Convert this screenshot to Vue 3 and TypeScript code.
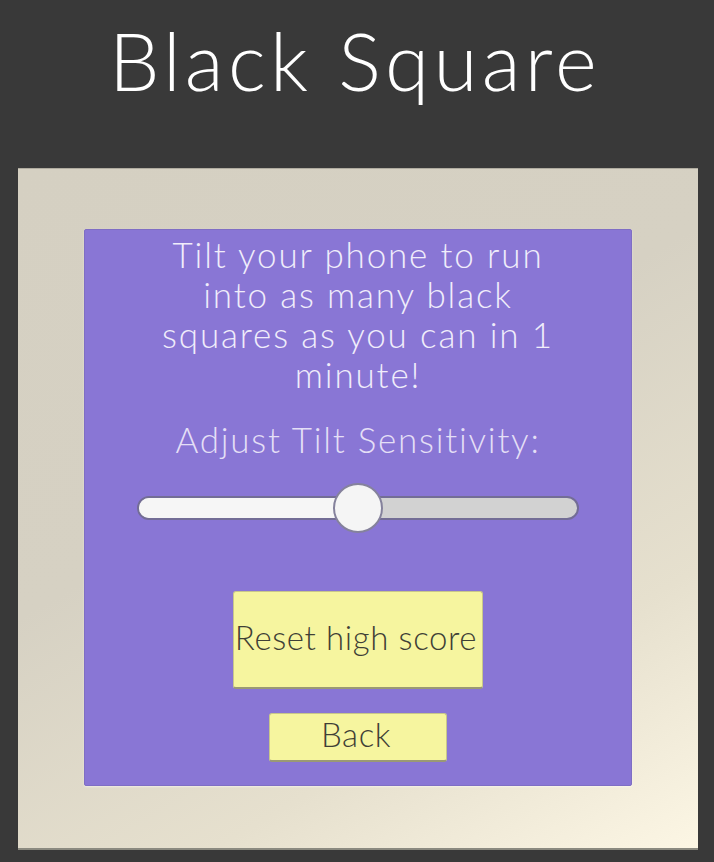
<script setup lang="ts">
const lines: string[] = ['Tilt your phone to run', 'into as many black', 'squares as you can in 1', 'minute!']
const sliderValue = 50
</script>

<template>
  <div class="page">
    <h1 class="title">Black Square</h1>
    <main class="board">
      <section class="card">
        <p class="intro">
          <span v-for="line in lines" :key="line" class="line">{{ line }}</span>
        </p>
        <label class="adjust">Adjust Tilt Sensitivity:</label>
        <div class="slider">
          <div class="fill" :style="{ width: sliderValue + '%' }"></div>
          <div class="thumb" :style="{ left: sliderValue + '%' }"></div>
        </div>
        <button class="btn reset">Reset high score</button>
        <button class="btn back">Back</button>
      </section>
    </main>
  </div>
</template>

<style>
html, body { margin: 0; background: #393939; }
</style>

<style scoped>
.page {
  width: 714px;
  height: 862px;
  box-sizing: border-box;
  padding: 0 16px 12px 18px;
  display: flex;
  flex-direction: column;
  background: #393939;
  font-family: "Lato", "Liberation Sans", sans-serif;
  font-weight: 300;
  overflow: hidden;
}
.title {
  margin: 0;
  height: 168px;
  box-sizing: border-box;
  padding: 14px 6px 0 0;
  font-size: 80px;
  line-height: 92px;
  font-weight: 300;
  color: #fff;
  text-align: center;
  letter-spacing: 4.3px;
}
.board {
  flex: 1;
  display: flex;
  justify-content: center;
  align-items: flex-start;
  padding-top: 60px;
  background: linear-gradient(150deg, #d5d0c2 0%, #d6d1c3 42%, #e6e0ce 74%, #fcf6e4 100%);
  border-top: 1px solid #b0aca0;
  border-bottom: 2px solid #8b8a80;
}
.card {
  width: 548px;
  height: 557px;
  box-sizing: border-box;
  background: #8976d5;
  border-radius: 2px;
  border: 1px solid #7f6ec4;
  box-shadow: 0 1px 2px rgba(255, 255, 255, 0.5);
  display: flex;
  flex-direction: column;
  align-items: center;
  padding-top: 4px;
}
.intro {
  margin: 0;
  font-size: 35px;
  line-height: 40px;
  color: #f0edfb;
  text-align: center;
  letter-spacing: 1.85px;
}
.line { display: block; }
.adjust {
  margin-top: 25px;
  font-size: 35px;
  line-height: 40px;
  color: #e4dff6;
  letter-spacing: 1.75px;
}
.slider {
  position: relative;
  margin-top: 37px;
  width: 442px;
  height: 24px;
  box-sizing: border-box;
  background: #d2d2d2;
  border: 2px solid #736d96;
  border-radius: 12px;
}
.fill {
  height: 100%;
  background: #f6f6f6;
  border-radius: 10px 0 0 10px;
}
.thumb {
  position: absolute;
  top: 50%;
  width: 50px;
  height: 50px;
  box-sizing: border-box;
  transform: translate(-50%, -50%);
  background: #f5f5f5;
  border: 2px solid #85829c;
  border-radius: 50%;
}
.btn {
  display: block;
  box-sizing: border-box;
  padding: 0 4px 6px 0;
  background: #f6f59f;
  border: 1px solid #c8c78a;
  border-bottom: 2px solid #9a9974;
  border-radius: 3px;
  color: #3f3f36;
  font-family: inherit;
  font-weight: 300;
  font-size: 33px;
  letter-spacing: 0.6px;
  text-align: center;
}
.reset {
  margin-top: 71px;
  width: 250px;
  height: 98px;
  white-space: nowrap;
}
.back {
  margin-top: 24px;
  width: 178px;
  height: 49px;
}
</style>
